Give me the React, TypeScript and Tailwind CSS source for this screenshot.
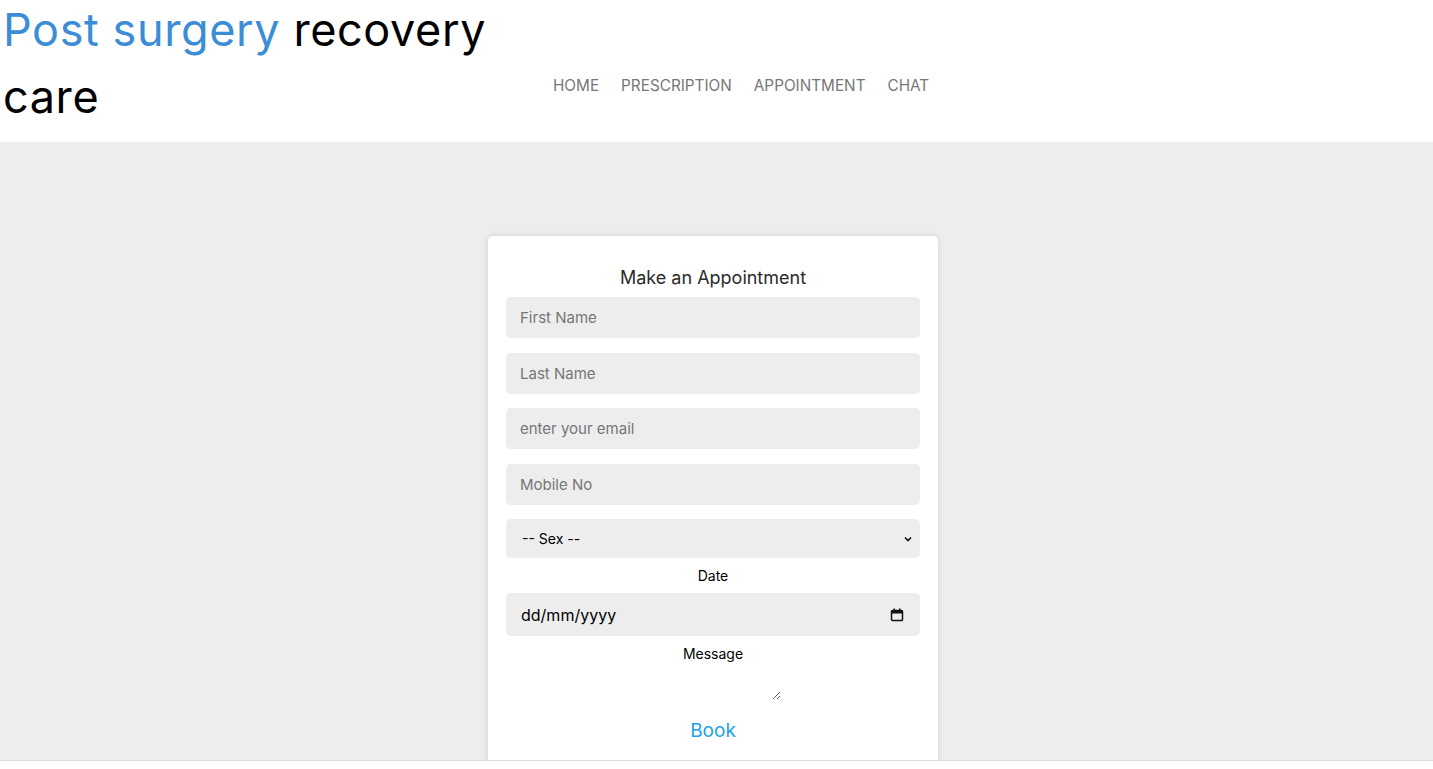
import React from "react";

export default function App() {
  const font = { fontFamily: "Inter, 'Open Sans', sans-serif" };
  return (
    <div className="w-[1433px] h-[769px] overflow-hidden bg-white" style={font}>
      <header className="flex h-[142px] bg-white">
        <h1 className="w-[510px] pl-[3px] -mt-[4px] text-[45px] leading-[67px] font-normal text-black tracking-[0.6px]">
          <span className="text-[#3a8dd6]">Post surgery</span> recovery care
        </h1>
        <nav className="flex gap-[22px] pt-[75px] pl-[43px] text-[15.3px] leading-[22px] text-[#777777] uppercase">
          <a>Home</a>
          <a>Prescription</a>
          <a>Appointment</a>
          <a>Chat</a>
        </nav>
      </header>
      <main className="h-[618px] bg-[#ededed] overflow-hidden flex justify-center pt-[94px] pr-[7px]">
        <div className="w-[450px] h-[600px] bg-white rounded-[5px] shadow-[0_0_6px_rgba(0,0,0,0.12)] px-[18px] pt-[27px] flex flex-col items-center">
          <h2 className="text-[18px] leading-[30px] text-[#2a2a2a]">Make an Appointment</h2>
          <div className="w-full flex flex-col gap-[14.7px] mt-[4px]">
            {["First Name", "Last Name", "enter your email", "Mobile No"].map((p) => (
              <input
                key={p}
                placeholder={p}
                className="w-full h-[41px] rounded-[5px] bg-[#ededed] px-[14px] text-[15px] placeholder:text-[#767676] outline-none"
              />
            ))}
          </div>
          <div className="w-full h-[39px] mt-[14px] rounded-[5px] bg-[#ededed] flex items-center justify-between pl-[16px] pr-[7px] text-[14px] text-black">
            <span>-- Sex --</span>
            <svg width="10" height="10" viewBox="0 0 10 10">
              <path d="M2 3.5 L5 6.5 L8 3.5" fill="none" stroke="#111" strokeWidth="1.6" />
            </svg>
          </div>
          <div className="mt-[8px] text-[14px] leading-[20px] text-black">Date</div>
          <div className="w-full h-[43px] mt-[7px] rounded-[5px] bg-[#ededed] flex items-center justify-between pl-[15px] pr-[16px] text-[16px] text-black">
            <span>dd/mm/yyyy</span>
            <svg width="14" height="14" viewBox="0 0 14 14">
              <rect x="1.5" y="2.5" width="11" height="10" rx="1" fill="none" stroke="#111" strokeWidth="1.5" />
              <rect x="1.5" y="2.5" width="11" height="3" fill="#111" />
              <rect x="3.5" y="0.5" width="1.5" height="3" fill="#111" />
              <rect x="9" y="0.5" width="1.5" height="3" fill="#111" />
            </svg>
          </div>
          <div className="mt-[8px] text-[14px] leading-[20px] text-black">Message</div>
          <textarea className="w-[136px] h-[29px] mt-[7px] bg-transparent outline-none border-0 resize" />
          <button className="mt-[18px] text-[19px] leading-[26px] text-[#1aa1e8]">Book</button>
        </div>
      </main>
      <div className="border-t border-[#dcdcdc] h-[9px] bg-white" />
    </div>
  );
}
